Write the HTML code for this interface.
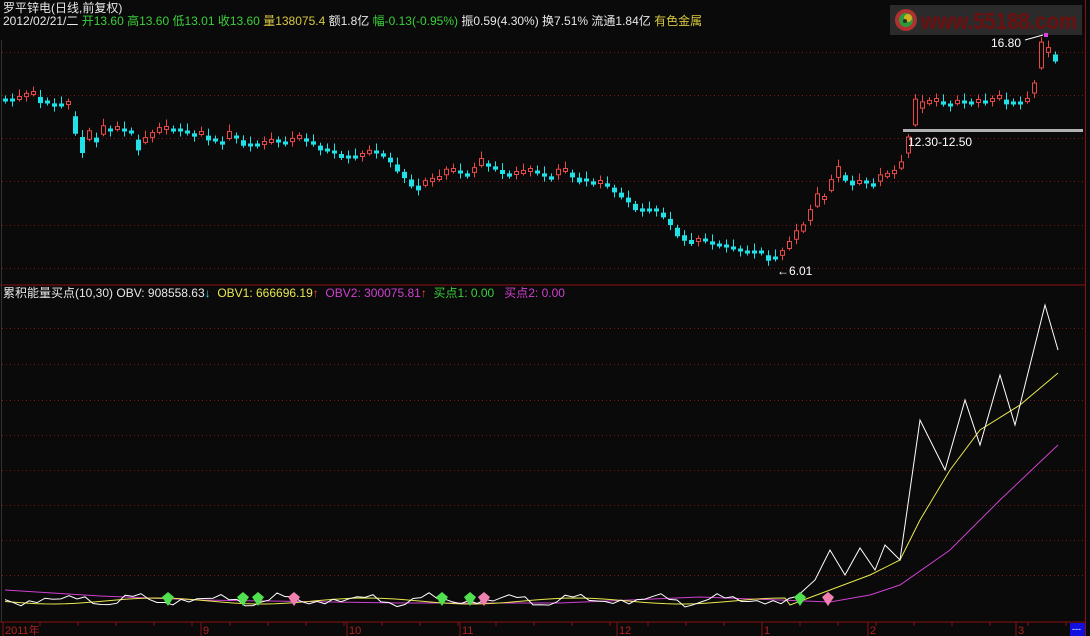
<!DOCTYPE html>
<html><head><meta charset="utf-8"><style>
html,body{margin:0;padding:0;background:#0a0a0a;width:1090px;height:636px;overflow:hidden}
#c{position:absolute;left:0;top:0}
.t{position:absolute;font-family:"Liberation Sans","Noto Sans CJK SC",sans-serif;font-size:12px;white-space:nowrap;line-height:13px}
</style></head><body>
<svg id="c" width="1090" height="636" xmlns="http://www.w3.org/2000/svg">
<g id="grid"></g>
<line x1="0" y1="285" x2="1085" y2="285" stroke="#8a1010" stroke-width="1"/>
<line x1="0" y1="622" x2="1085" y2="622" stroke="#8a1010" stroke-width="1"/>
<line x1="1085.5" y1="0" x2="1085.5" y2="636" stroke="#8a1010" stroke-width="1"/>
<line x1="1.5" y1="40" x2="1.5" y2="622" stroke="#333" stroke-width="1"/>
<rect x="890" y="5" width="192" height="30" fill="#2b2b2b"/>
<circle cx="906" cy="20" r="11" fill="#b03030"/><circle cx="906" cy="20" r="7" fill="#2b9a3a"/><circle cx="908" cy="18" r="4" fill="#d0b020"/><circle cx="905" cy="21" r="2" fill="#2b2b2b"/>
<text x="921" y="29" font-family="Liberation Sans" font-weight="bold" font-size="23" fill="#6e1010" textLength="156" lengthAdjust="spacingAndGlyphs">www.55188.com</text>
<rect x="903" y="129" width="180" height="3" fill="#b0b0b0"/>
<g id="k"></g>
<g id="ind"></g>
<rect x="1070" y="623" width="15" height="13" fill="#1010e0"/>
<text x="1072" y="632" font-family="Liberation Sans" font-size="9" fill="#fff">---</text>
<g id="ax"></g>
</svg>
<div class="t" style="left:3px;top:2px;color:#e8e8e8">罗平锌电(日线,前复权)</div>
<div class="t" style="left:3px;top:15px;color:#e8e8e8">2012/02/21/二 <span style="color:#3ad03a">开13.60 高13.60 低13.01 收13.60</span> <span style="color:#d8c840">量138075.4</span> 额1.8亿 <span style="color:#3ad03a">幅-0.13(-0.95%)</span> 振0.59(4.30%) 换7.51% 流通1.84亿 <span style="color:#d8c840">有色金属</span></div>
<div class="t" style="left:3px;top:287px;color:#e8e8e8">累积能量买点(10,30) OBV: 908558.63<span style="color:#2ad8e8">↓</span> &nbsp;<span style="color:#e8e850">OBV1: 666696.19</span><span style="color:#ff4040">↑</span> &nbsp;<span style="color:#d040d0">OBV2: 300075.81</span><span style="color:#ff4040">↑</span> &nbsp;<span style="color:#3ad03a">买点1: 0.00</span> &nbsp;&nbsp;<span style="color:#d040d0">买点2: 0.00</span></div>
<div class="t" style="left:991px;top:37px;color:#fff">16.80</div>
<div class="t" style="left:908px;top:136px;color:#fff">12.30-12.50</div>
<div class="t" style="left:777px;top:265px;color:#fff">←6.01</div>
<script>
(function(){
var NS="http://www.w3.org/2000/svg";
function el(p,n,a){var e=document.createElementNS(NS,n);for(var q in a)e.setAttribute(q,a[q]);p.appendChild(e);return e;}
var g=document.getElementById('grid');
[52,95,138,181,225,268,328,364,400,435,470,505,540,575].forEach(function(y){el(g,'line',{x1:2,y1:y+.5,x2:1085,y2:y+.5,stroke:'#7a1818','stroke-dasharray':'1 3'});});
var ax=document.getElementById('ax');
[["2011年",5],["9",203],["10",349],["11",462],["12",619],["1",764],["2",870],["3",1018]].forEach(function(a){
 el(ax,'line',{x1:a[1]-2,y1:622,x2:a[1]-2,y2:636,stroke:'#8a1010'});
 var t=el(ax,'text',{x:a[1],y:634,'font-family':'Liberation Sans, Noto Sans CJK SC','font-size':11,fill:'#b02020'});t.textContent=a[0];});
for(var xx=40;xx<1080;xx+=38){el(ax,'line',{x1:xx,y1:622,x2:xx,y2:626,stroke:'#8a1010'});}
var m=[100,100,98,95,93,100,102,105,105,103,125,145,135,140,130,130,128,130,132,145,140,135,130,128,130,130,132,135,133,138,140,143,135,137,143,145,145,143,141,141,143,140,137,140,143,148,150,152,156,157,157,155,152,152,155,160,168,175,183,188,183,180,178,172,170,172,175,170,162,165,168,172,175,173,172,170,172,175,178,172,170,175,180,180,183,182,185,190,195,200,207,210,210,210,215,222,232,238,242,240,240,243,245,246,248,250,252,252,252,258,258,253,245,235,228,215,200,198,185,172,178,183,182,182,185,178,175,172,165,145,112,105,102,100,103,105,102,102,103,101,102,100,97,102,103,103,100,88,55,50,58];
var kg=document.getElementById('k');
for(var i=0;i<m.length;i++){var x=5+i*7,y=m[i],p=i?m[i-1]:m[0];var up=y<p;var d=Math.abs(y-p);var h=Math.max(3,Math.min(d*0.75,28)+1);
 var bt=y-h/2;var col=up?'#e84848':'#20e0e8';
 el(kg,'line',{x1:x+.5,y1:bt-3-(i%3)*2,x2:x+.5,y2:bt+h+2+(i%2)*3,stroke:col});
 if(up)el(kg,'rect',{x:x-1.5,y:bt,width:4,height:h,fill:'#0a0a0a',stroke:col});
 else el(kg,'rect',{x:x-2,y:bt,width:5,height:h,fill:col});}
el(kg,'rect',{x:1044,y:33,width:4,height:4,fill:'#e040e0'});
el(kg,'line',{x1:1025,y1:40,x2:1043,y2:35,stroke:'#fff'});
var ind=document.getElementById('ind');
function pl(pts,c){el(ind,'polyline',{points:pts.map(function(q){return q.join(',')}).join(' '),fill:'none',stroke:c,'stroke-width':1});}
var w=[],yv=[],mg=[];
for(var x2=5;x2<=800;x2+=8){var n=Math.sin(x2*0.7)*4+Math.sin(x2*0.13)*2+Math.sin(x2*1.9)*2;w.push([x2,600+n]);}
[[815,580],[830,550],[845,575],[860,548],[875,570],[885,545],[900,560],[920,420],[945,470],[965,400],[980,445],[1000,375],[1015,425],[1045,305],[1058,350]].forEach(function(q){w.push(q)});
for(var x3=5;x3<=790;x3+=10){yv.push([x3,601+Math.sin(x3*0.03)*3]);}
[[790,605],[830,590],[870,575],[900,560],[920,520],[950,470],[980,430],[1020,405],[1058,373]].forEach(function(q){yv.push(q)});
[[5,590],[100,596],[200,600],[400,603],[560,603],[700,597],[780,600],[830,602],[870,595],[900,585],[950,550],[1000,500],[1058,445]].forEach(function(q){mg.push(q)});
pl(mg,'#d040d0');pl(yv,'#e8e850');pl(w,'#ffffff');
[[168,'#50e050'],[243,'#50e050'],[258,'#50e050'],[442,'#50e050'],[470,'#50e050'],[800,'#50e050'],[294,'#f080b0'],[484,'#f080b0'],[828,'#f080b0']].forEach(function(a){
 el(ind,'path',{d:'M'+(a[0]-6)+' 597 L'+a[0]+' 592 L'+(a[0]+6)+' 597 L'+a[0]+' 606 Z',fill:a[1]});});
})();
</script>
</body></html>
